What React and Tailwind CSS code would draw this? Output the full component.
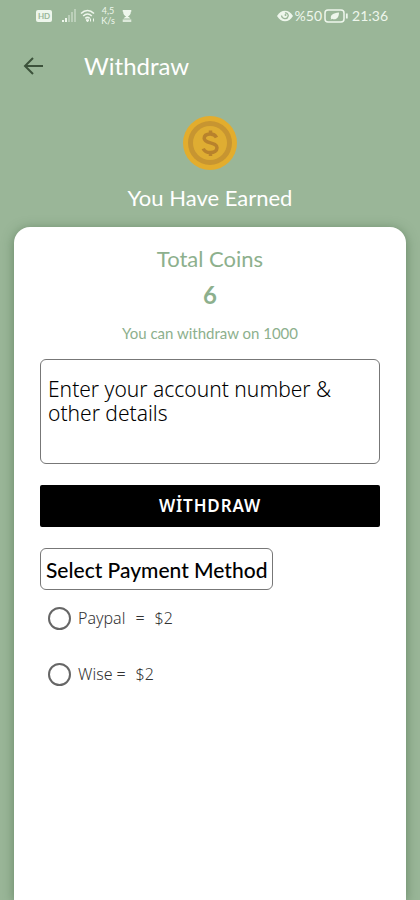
import { useState } from 'react';

const methods = [
  { id: 'paypal', name: 'Paypal', gap: 'gap-2.5', amount: '$2' },
  { id: 'wise', name: 'Wise', gap: 'gap-1', amount: '$2' },
];

function StatusBar() {
  return (
    <div className="flex h-8 items-center justify-between pr-8 pl-9 text-[#eef6ec]">
      <div className="flex items-center">
        <span className="flex h-3 w-4 items-center justify-center rounded-xs bg-[#eef6ec] text-[8px] font-bold text-[#9ab698]">
          HD
        </span>
        <svg className="ml-2.5 h-3.5 w-3.5" viewBox="0 0 14 14" fill="currentColor" aria-hidden="true">
          <path d="M0 11h2v2H0zM3 9h2v4H3z" />
          <path d="M6 6h2v7H6zM9 3h2v10H9zM12 0h2v13h-2z" opacity="0.4" />
        </svg>
        <svg className="ml-1 h-3.5 w-4" viewBox="0 0 16 14" fill="none" stroke="currentColor" strokeWidth="1.6" aria-hidden="true">
          <path d="M1 4.5C5 .6 10 .6 14 4.5M3.2 7C6 4.4 9 4.4 11.8 7M5.3 9.3c1.4-1.2 3-1.2 4.4 0" />
          <path d="M6.2 10.8h2.6L7.5 13zM10.5 12.5v-3M13.5 9.5v3" fill="currentColor" strokeWidth="1" />
        </svg>
        <span className="ml-1 flex w-4 flex-col text-center text-[9px] leading-[10px]">
          <span>4,5</span>
          <span>K/s</span>
        </span>
        <svg className="ml-1.5 h-3 w-2.5" viewBox="0 0 10 14" fill="currentColor" aria-hidden="true">
          <path d="M0 0h10v2H9.5C9.5 5 8 6.5 6 7.5c1.5.5 2.5 1.5 3 2.5H1c.5-1 1.500-2 3-2.500C2 6.500.5 5 .5 2H0z" />
          <path d="M0 11h10v3H0z" opacity="0.8" />
        </svg>
      </div>
      <div className="flex items-center text-sm">
        <svg className="h-3 w-4" viewBox="0 0 16 12" aria-hidden="true">
          <path d="M0 6c4-7 12-7 16 0-4 7-12 7-16 0z" fill="currentColor" />
          <path d="M4.5 5.5C5 9 10 10 11 6.500M8 3c2-.5 4 1.500 3 3.500" fill="none" stroke="#9ab698" strokeWidth="1.3" />
          <circle cx="8.5" cy="5" r="1" fill="#9ab698" />
        </svg>
        <span className="ml-0.5">%50</span>
        <svg className="ml-0.5 h-3.5 w-6" viewBox="0 0 24 14" fill="none" stroke="currentColor" aria-hidden="true">
          <rect x="1" y="1" width="19" height="12" rx="3" strokeWidth="1.5" />
          <path d="M22.8 4.5v5" strokeWidth="1.8" />
          <path d="M7 10C6 6 9 4 15 3.500 15 9 12 11.500 8 9.800L6.500 11z" fill="currentColor" stroke="none" />
        </svg>
        <span className="ml-1">21:36</span>
      </div>
    </div>
  );
}

function Coin() {
  return (
    <svg className="h-[54px] w-[54px]" viewBox="0 0 54 54" role="img" aria-label="Coin">
      <circle cx="27" cy="27" r="27" fill="#e3ad2d" />
      <circle cx="27" cy="27" r="22" fill="#c79531" />
      <circle cx="27" cy="27" r="17" fill="#dfad32" />
      <path
        d="M33.5 21.5c-1.2-2.5-3.3-3.5-6.3-3.5-3.6 0-6 1.6-6 4.3 0 6 12.8 3.2 12.8 9.5 0 3-2.7 4.700-6.600 4.700-3.300 0-6-1.200-7.200-3.900M27.500 14.500V18M27.500 36.500V40"
        fill="none"
        stroke="#b8822c"
        strokeWidth="3.5"
      />
    </svg>
  );
}

function App() {
  const [details, setDetails] = useState('');
  const [method, setMethod] = useState('');

  return (
    <div className="flex min-h-screen flex-col overflow-hidden bg-[#9ab698] font-['Lato',sans-serif]">
      <StatusBar />

      <header className="flex h-[68px] items-center pl-[22px] text-white">
        <button type="button" aria-label="Back" className="text-[#3c523b]">
          <svg className="h-6 w-6" viewBox="0 0 24 24" fill="none" stroke="currentColor" strokeWidth="2" aria-hidden="true">
            <path d="M21 12H3M11 4l-8 8 8 8" />
          </svg>
        </button>
        <h1 className="ml-[38px] text-2xl">Withdraw</h1>
      </header>

      <section className="flex flex-col items-center pt-4 text-white">
        <Coin />
        <p className="mt-3 text-[22px] leading-8">You Have Earned</p>
      </section>

      <main className="mx-3.5 mt-[13px] flex-1 rounded-t-2xl bg-white px-[26px] pt-4 shadow-[0_2px_12px_rgba(50,85,50,0.5)]">
        <div className="text-center text-[#8db08d]">
          <h2 className="text-[22px] leading-8">Total Coins</h2>
          <p className="mt-1 text-2xl leading-8 font-bold">6</p>
          <p className="mt-3 text-[15px] leading-5">You can withdraw on 1000</p>
        </div>

        <form onSubmit={(event) => event.preventDefault()}>
          <textarea
            aria-label="Account details"
            value={details}
            onChange={(event) => setDetails(event.target.value)}
            placeholder="Enter your account number & other details"
            className="mt-4 block h-[105px] w-full resize-none rounded-md border border-[#777] px-[7px] py-[17px] font-['Noto_Sans',sans-serif] text-[21px] leading-6 font-light text-black placeholder:text-black"
          />
          <button
            type="submit"
            className="mt-[21px] h-[42px] w-full rounded-xs bg-black font-['Noto_Sans',sans-serif] text-[17px] font-semibold tracking-wider text-white"
          >
            WİTHDRAW
          </button>

          <fieldset className="mt-[21px]">
            <legend className="h-[42px] rounded-md border border-[#777] px-[5px] text-[21px] leading-[42px] font-medium text-black">
              Select Payment Method
            </legend>
            {methods.map((item) => (
              <label
                key={item.id}
                className="flex h-14 items-center pl-2 font-['Noto_Sans',sans-serif] text-base font-light text-[#333]"
              >
                <input
                  type="radio"
                  name="method"
                  value={item.id}
                  checked={method === item.id}
                  onChange={() => setMethod(item.id)}
                  className="mr-[7px] h-[23px] w-[23px] appearance-none rounded-full border-2 border-[#666] checked:border-[7px]"
                />
                <span className={`flex ${item.gap}`}>
                  <span>{item.name}</span>
                  <span>=</span>
                </span>
                <span className="ml-2.5">{item.amount}</span>
              </label>
            ))}
          </fieldset>
        </form>
      </main>
    </div>
  );
}

export default App;
